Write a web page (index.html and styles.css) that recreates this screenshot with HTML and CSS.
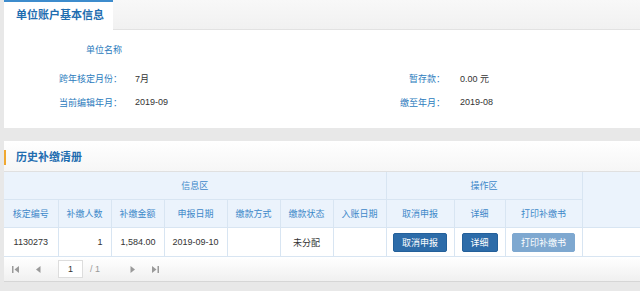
FILE: index.html
```html
<!DOCTYPE html>
<html lang="zh-CN">
<head>
  <meta charset="UTF-8">
  <title>单位账户基本信息</title>
  <link rel="stylesheet" href="styles.css">
</head>
<body>
<div class="panel info-panel">
  <div class="tab-bar">
    <div class="tab active">单位账户基本信息</div>
    <div class="tab-rest"></div>
  </div>
  <div class="info-body">
    <div class="info-row spaced">
      <span class="label">单位名称</span>
      <span class="value"></span>
      <span class="label narrow"></span>
      <span class="value"></span>
    </div>
    <div class="info-row">
      <span class="label">跨年核定月份：</span>
      <span class="value">7月</span>
      <span class="label narrow">暂存款：</span>
      <span class="value">0.00 元</span>
    </div>
    <div class="info-row">
      <span class="label">当前编辑年月：</span>
      <span class="value">2019-09</span>
      <span class="label narrow">缴至年月：</span>
      <span class="value">2019-08</span>
    </div>
  </div>
</div>

<div class="panel list-panel">
  <div class="panel-head">历史补缴清册</div>
  <table class="grid">
    <colgroup>
      <col style="width:54px"><col style="width:53px"><col style="width:53px"><col style="width:63px">
      <col style="width:53px"><col style="width:53px"><col style="width:53px"><col style="width:68px">
      <col style="width:51px"><col style="width:77px"><col>
    </colgroup>
    <thead>
      <tr>
        <th colspan="7">信息区</th>
        <th colspan="3">操作区</th>
        <th rowspan="2"></th>
      </tr>
      <tr>
        <th>核定编号</th>
        <th>补缴人数</th>
        <th>补缴金额</th>
        <th>申报日期</th>
        <th>缴款方式</th>
        <th>缴款状态</th>
        <th>入账日期</th>
        <th>取消申报</th>
        <th>详细</th>
        <th>打印补缴书</th>
      </tr>
    </thead>
    <tbody>
      <tr>
        <td>1130273</td>
        <td class="num">1</td>
        <td class="num">1,584.00</td>
        <td>2019-09-10</td>
        <td></td>
        <td>未分配</td>
        <td></td>
        <td><button class="btn">取消申报</button></td>
        <td><button class="btn">详细</button></td>
        <td><button class="btn disabled">打印补缴书</button></td>
        <td></td>
      </tr>
    </tbody>
  </table>
  <div class="pager">
    <span class="pg-icon">
      <svg width="9" height="9" viewBox="0 0 9 9"><rect x="1" y="1" width="1.5" height="7" fill="#9a9a9a"/><path d="M8 1 L3.5 4.5 L8 8 Z" fill="#9a9a9a"/></svg>
    </span>
    <span class="pg-icon">
      <svg width="9" height="9" viewBox="0 0 9 9"><path d="M6.5 1 L2 4.5 L6.5 8 Z" fill="#9a9a9a"/></svg>
    </span>
    <input class="pg-input" type="text" value="1">
    <span class="pg-total">/ 1</span>
    <span class="pg-icon next">
      <svg width="9" height="9" viewBox="0 0 9 9"><path d="M2.5 1 L7 4.5 L2.5 8 Z" fill="#9a9a9a"/></svg>
    </span>
    <span class="pg-icon">
      <svg width="9" height="9" viewBox="0 0 9 9"><path d="M1 1 L5.5 4.5 L1 8 Z" fill="#9a9a9a"/><rect x="6.5" y="1" width="1.5" height="7" fill="#9a9a9a"/></svg>
    </span>
  </div>
</div>
</body>
</html>
```

FILE: styles.css
```css
body {
  margin: 0;
  padding: 0 0 0 4px;
  background-color: #e8e8e8;
  font-family: "Liberation Sans", "Noto Sans CJK SC", sans-serif;
  font-size: 9px;
  color: #333;
}
.panel {
  background-color: white;
}
.tab-bar {
  display: flex;
  height: 32px;
}
.tab {
  width: 97px;
  padding-left: 12px;
  border-top: 2px solid #3d8ccd;
  background-color: white;
  color: #1f6db0;
  font-size: 11px;
  font-weight: bold;
  line-height: 26px;
}
.tab-rest {
  flex: 1;
  height: 29px;
  background: linear-gradient(#f8f8f8, #f1f1f1);
  border-bottom: 1px solid #e2e2e2;
}
.info-body {
  padding: 5px 0 14px;
}
.info-row {
  display: flex;
  align-items: center;
  height: 24px;
}
.info-row.spaced {
  margin-bottom: 5px;
}
.label {
  width: 118px;
  text-align: right;
  color: #2b7bbd;
}
.label.narrow {
  width: 90px;
  padding-right: 4px;
}
.value {
  width: 220px;
  padding-left: 13px;
}
.info-row .value:last-child {
  width: auto;
  padding-left: 11px;
}
.list-panel {
  margin-top: 13px;
  border-bottom: 1px solid #d6d6d6;
}
.panel-head {
  position: relative;
  height: 30px;
  line-height: 32px;
  padding-left: 12px;
  background: linear-gradient(#ffffff, #f6f6f6);
  border-bottom: 1px solid #e0e0e0;
  color: #1f6db0;
  font-size: 11px;
  font-weight: bold;
}
.panel-head::before {
  content: "";
  position: absolute;
  left: 0;
  top: 9px;
  width: 2px;
  height: 15px;
  background-color: #f0a830;
}
.grid {
  width: 100%;
  border-collapse: collapse;
  table-layout: fixed;
}
.grid th {
  height: 27px;
  padding: 0;
  background-color: #ebf3fc;
  border: 1px solid #d8e5f2;
  border-top: none;
  color: #3d88c9;
  font-weight: normal;
  text-align: center;
}
.grid th:first-child, .grid td:first-child {
  border-left: none;
}
.grid th:last-child, .grid td:last-child {
  border-right: none;
}
.grid td {
  height: 28px;
  padding: 0;
  border: 1px solid #d8e5f2;
  border-top: none;
  text-align: center;
  color: #333;
}
.grid td.num {
  text-align: right;
  padding-right: 8px;
}
.btn {
  height: 19px;
  padding: 0 8px;
  border: 1px solid #24609a;
  border-radius: 2px;
  background-color: #2d6ca9;
  color: white;
  font-family: inherit;
  font-size: 9px;
  cursor: pointer;
}
.btn.disabled {
  background-color: #7ea8d0;
  border-color: #7ea8d0;
}
.pager {
  display: flex;
  align-items: center;
  height: 24px;
  padding-left: 7px;
  background: linear-gradient(#ffffff, #f0f0f0);
}
.pg-icon {
  display: flex;
  width: 23px;
  justify-content: flex-start;
}
.pg-icon.next {
  margin-left: 28px;
}
.pg-input {
  width: 23px;
  height: 16px;
  margin-left: 1px;
  padding: 0;
  border: 1px solid #ddd;
  text-align: center;
  font-family: inherit;
  font-size: 9px;
  color: #333;
}
.pg-total {
  margin-left: 7px;
  color: #999;
}
```
